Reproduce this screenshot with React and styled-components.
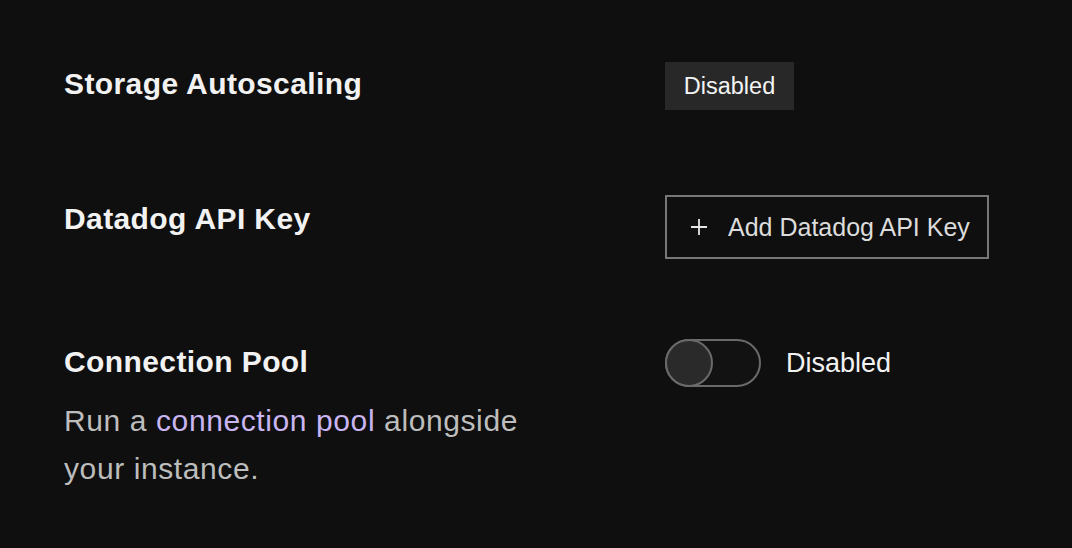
import React from 'react';
import styled, { createGlobalStyle } from 'styled-components';

const GlobalStyle = createGlobalStyle`
  html, body {
    margin: 0;
    padding: 0;
    background: #0f0f0f;
  }
  body {
    font-family: "Liberation Sans", Arial, sans-serif;
    color: #f0f0f0;
  }
`;

const Page = styled.div`
  width: 1072px;
  height: 548px;
  box-sizing: border-box;
  padding: 62px 0 0 64px;
  display: flex;
  flex-direction: column;
  overflow: hidden;
`;

const Row = styled.section`
  display: grid;
  grid-template-columns: 601px 1fr;
  align-items: start;
  margin-top: ${(p) => p.$space || 0}px;
`;

const Info = styled.div`
  display: flex;
  flex-direction: column;
  padding-top: ${(p) => p.$offset ?? 4}px;
`;

const Title = styled.h3`
  margin: 0;
  font-size: 30px;
  line-height: 36px;
  font-weight: 700;
  color: #f2f2f2;
  letter-spacing: 0.4px;
`;

const Description = styled.p`
  margin: 17px 0 0;
  max-width: 480px;
  font-size: 30px;
  line-height: 48px;
  color: #bdbdbd;
  letter-spacing: 0.6px;
`;

const Link = styled.a`
  color: #c9b5f2;
  text-decoration: none;
`;

const Badge = styled.span`
  display: inline-flex;
  align-items: center;
  justify-content: center;
  width: 129px;
  height: 48px;
  background: #282828;
  color: #f4f4f4;
  font-size: 23.5px;
  justify-self: start;
`;

const OutlineButton = styled.button`
  justify-self: start;
  display: inline-flex;
  align-items: center;
  gap: 21px;
  height: 64px;
  box-sizing: border-box;
  padding: 0 17px 0 24px;
  background: transparent;
  border: 2px solid #777;
  border-radius: 0;
  color: #dcdcdc;
  font-family: inherit;
  font-size: 25px;
  cursor: pointer;
`;

const Control = styled.div`
  display: flex;
  align-items: center;
  gap: 25px;
`;

const Track = styled.button`
  position: relative;
  width: 96px;
  height: 48px;
  box-sizing: border-box;
  padding: 0;
  border: 2px solid #6a6a6a;
  border-radius: 24px;
  background: #121212;
  cursor: pointer;
`;

const Knob = styled.span`
  position: absolute;
  top: -2px;
  left: ${(p) => (p.$on ? '46px' : '-2px')};
  width: 48px;
  height: 48px;
  box-sizing: border-box;
  border-radius: 50%;
  border: 2px solid #6a6a6a;
  background: #2a2a2a;
`;

const ToggleLabel = styled.span`
  font-size: 27px;
  color: #f2f2f2;
`;

function PlusIcon() {
  return (
    <svg width="16" height="16" viewBox="0 0 16 16" fill="none">
      <path d="M8 0v16M0 8h16" stroke="#e6e6e6" strokeWidth="1.8" />
    </svg>
  );
}

function App() {
  return (
    <>
      <GlobalStyle />
      <Page>
        <Row>
          <Info $offset={4}>
            <Title>Storage Autoscaling</Title>
          </Info>
          <Badge>Disabled</Badge>
        </Row>

        <Row $space={85}>
          <Info $offset={6}>
            <Title>Datadog API Key</Title>
          </Info>
          <OutlineButton>
            <PlusIcon />
            Add Datadog API Key
          </OutlineButton>
        </Row>

        <Row $space={80}>
          <Info $offset={5}>
            <Title>Connection Pool</Title>
            <Description>
              Run a <Link href="#">connection pool</Link> alongside your instance.
            </Description>
          </Info>
          <Control>
            <Track aria-label="Connection pool">
              <Knob $on={false} />
            </Track>
            <ToggleLabel>Disabled</ToggleLabel>
          </Control>
        </Row>
      </Page>
    </>
  );
}

export default App;
